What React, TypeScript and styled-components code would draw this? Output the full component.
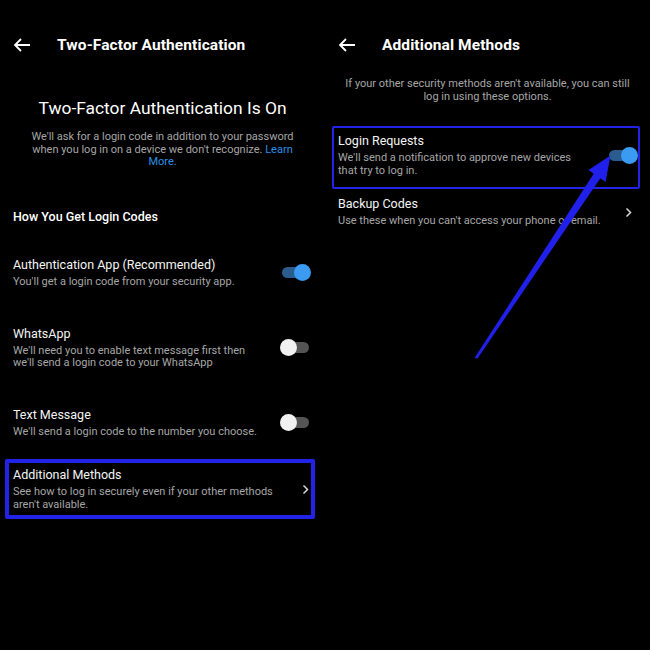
import React from "react";
import styled, { createGlobalStyle } from "styled-components";

const GlobalStyle = createGlobalStyle`
  html, body {
    margin: 0;
    padding: 0;
    background: #000;
  }
  body {
    font-family: Roboto, "Liberation Sans", Arial, sans-serif;
    color: #fff;
  }
`;

const Screen = styled.div`
  position: relative;
  width: 650px;
  height: 650px;
  display: grid;
  grid-template-columns: 325px 325px;
  background: #000;
  overflow: hidden;
`;

const Panel = styled.div`
  display: flex;
  flex-direction: column;
`;

const Header = styled.div`
  display: flex;
  align-items: center;
  height: 22px;
  margin-top: 34px;
  padding-left: 13px;
`;

const BackButton = styled.span`
  display: flex;
  width: 44px;
  align-items: center;
`;

const HeaderTitle = styled.h1`
  margin: 0;
  font-size: 15.5px;
  font-weight: 700;
  letter-spacing: 0.1px;
`;

const Heading = styled.h2`
  margin: 40px 0 0;
  font-size: 17.4px;
  font-weight: 400;
  text-align: center;
  line-height: 24px;
`;

const Intro = styled.p<{ $top: number }>`
  margin: ${(p) => p.$top}px 20px 0;
  font-size: 11px;
  line-height: 12.7px;
  color: #a6a6a6;
  text-align: center;
`;

const Link = styled.span`
  color: #2d8fe6;
`;

const SectionLabel = styled.div`
  margin: 40px 0 0 13px;
  font-size: 12.5px;
  font-weight: 500;
  line-height: 16px;
`;

const List = styled.div<{ $top: number; $gap: number }>`
  display: flex;
  flex-direction: column;
  gap: ${(p) => p.$gap}px;
  margin-top: ${(p) => p.$top}px;
`;

const Row = styled.div`
  display: flex;
  align-items: center;
  padding: 0 16px 0 13px;
`;

const Boxed = styled.div<{ $border: number; $top: number; $pt: number; $pb: number }>`
  display: flex;
  align-items: center;
  margin: ${(p) => p.$top}px 10px 0 ${(p) => 13 - p.$border - 4}px;
  padding: ${(p) => p.$pt}px ${(p) => 4 - p.$border}px ${(p) => p.$pb}px 4px;
  border: ${(p) => p.$border}px solid #2222e8;
  border-radius: 2px;
`;

const Texts = styled.div`
  flex: 1;
  min-width: 0;
`;

const ItemTitle = styled.div`
  font-size: 12.5px;
  line-height: 16px;
  color: #f4f4f4;
`;

const ItemSub = styled.div`
  margin-top: 3px;
  font-size: 11px;
  line-height: 12.5px;
  color: #a6a6a6;
  max-width: 275px;
`;

const Track = styled.span<{ $on: boolean }>`
  position: relative;
  flex: none;
  width: 27px;
  height: 11px;
  border-radius: 6px;
  background: ${(p) => (p.$on ? "#2a5c8e" : "#545454")};
  margin-left: 10px;
`;

const Knob = styled.span<{ $on: boolean }>`
  position: absolute;
  top: -3px;
  ${(p) => (p.$on ? "right: -2px;" : "left: -2px;")}
  width: 17px;
  height: 17px;
  border-radius: 50%;
  background: ${(p) => (p.$on ? "#3b9bf2" : "#f1f1f1")};
`;

const Chevron = styled.span`
  display: flex;
  flex: none;
  width: 12px;
  justify-content: center;
`;

const Overlay = styled.svg`
  position: absolute;
  inset: 0;
  pointer-events: none;
`;

function BackArrow() {
  return (
    <svg width="18" height="14" viewBox="0 0 18 14">
      <path d="M17 7H2M8 1L2 7l6 6" stroke="#fff" strokeWidth="1.8" fill="none" />
    </svg>
  );
}

function ChevronIcon() {
  return (
    <svg width="7" height="11" viewBox="0 0 7 11">
      <path d="M1.5 1.5l4 4-4 4" stroke="#d8d8d8" strokeWidth="1.5" fill="none" />
    </svg>
  );
}

function Toggle({ on }: { on: boolean }) {
  return (
    <Track $on={on}>
      <Knob $on={on} />
    </Track>
  );
}

function Item({ title, sub }: { title: string; sub: React.ReactNode }) {
  return (
    <Texts>
      <ItemTitle>{title}</ItemTitle>
      <ItemSub>{sub}</ItemSub>
    </Texts>
  );
}

export default function App() {
  return (
    <>
      <GlobalStyle />
      <Screen>
        <Panel>
          <Header>
            <BackButton>
              <BackArrow />
            </BackButton>
            <HeaderTitle>Two-Factor Authentication</HeaderTitle>
          </Header>
          <Heading>Two-Factor Authentication Is On</Heading>
          <Intro $top={11}>
            We'll ask for a login code in addition to your password when you log in on a
            device we don't recognize. <Link>Learn More.</Link>
          </Intro>
          <SectionLabel>How You Get Login Codes</SectionLabel>
          <List $top={32} $gap={37}>
            <Row>
              <Item
                title="Authentication App (Recommended)"
                sub="You'll get a login code from your security app."
              />
              <Toggle on />
            </Row>
            <Row>
              <Item
                title="WhatsApp"
                sub={
                  <>
                    We'll need you to enable text message first then
                    <br />
                    we'll send a login code to your WhatsApp
                  </>
                }
              />
              <Toggle on={false} />
            </Row>
            <Row>
              <Item title="Text Message" sub="We'll send a login code to the number you choose." />
              <Toggle on={false} />
            </Row>
          </List>
          <Boxed $border={4} $top={21} $pt={4} $pb={4}>
            <Item
              title="Additional Methods"
              sub="See how to log in securely even if your other methods aren't available."
            />
            <Chevron>
              <ChevronIcon />
            </Chevron>
          </Boxed>
        </Panel>

        <Panel>
          <Header>
            <BackButton>
              <BackArrow />
            </BackButton>
            <HeaderTitle>Additional Methods</HeaderTitle>
          </Header>
          <Intro $top={22}>
            If your other security methods aren't available, you can still log in using
            these options.
          </Intro>
          <Boxed $border={2} $top={23} $pt={5} $pb={10}>
            <Item
              title="Login Requests"
              sub={
                <>
                  We'll send a notification to approve new devices
                  <br />
                  that try to log in.
                </>
              }
            />
            <Toggle on />
          </Boxed>
          <List $top={7} $gap={0}>
            <Row>
              <Item
                title="Backup Codes"
                sub="Use these when you can't access your phone or email."
              />
              <Chevron>
                <ChevronIcon />
              </Chevron>
            </Row>
          </List>
        </Panel>

        <Overlay width="650" height="650" viewBox="0 0 650 650">
          <polygon
            points="474.5,358 593.7,173.8 588.5,170 610.5,155.5 605.5,182 600.3,178.2 477.5,358.5"
            fill="#2020ea"
          />
        </Overlay>
      </Screen>
    </>
  );
}
